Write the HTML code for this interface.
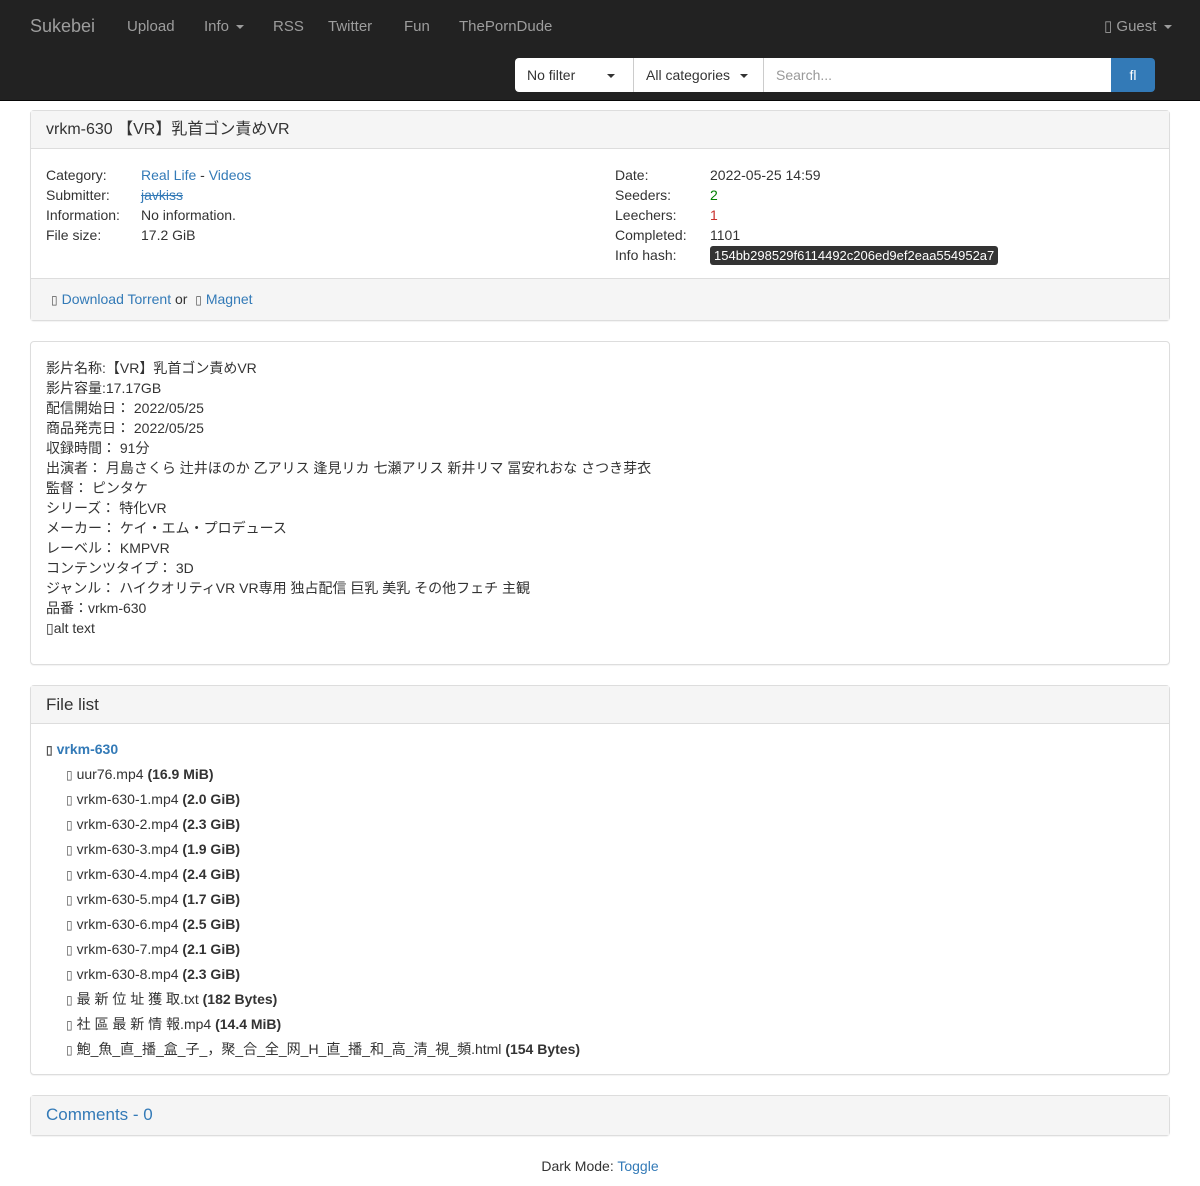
<!DOCTYPE html>
<html><head><meta charset="utf-8"><style>
*{box-sizing:border-box}
body{margin:0;background:#fff;font-family:"Liberation Sans","Noto Sans CJK JP",sans-serif;font-size:14px;color:#333;line-height:20px}
a{color:#337ab7;text-decoration:none}
.nav{height:101px;background:#222;border-bottom:1px solid #080808;position:relative}
.nav .i{position:absolute;top:17px;color:#9d9d9d;font-size:15px}
.brand{font-size:18px!important;top:16px!important}
.caret{display:inline-block;border-top:4px solid;border-left:4px solid transparent;border-right:4px solid transparent;vertical-align:middle;margin-left:3px}
.srch{position:absolute;top:58px;left:515px;height:34px;width:640px;display:flex}
.srch div{background:#fff;height:34px;line-height:34px;padding:0 12px;border-right:1px solid #ccc;color:#333}
.panel{position:absolute;left:30px;width:1140px;border:1px solid #ddd;border-radius:4px;background:#fff;box-shadow:0 1px 1px rgba(0,0,0,.05)}
.ph{background:#f5f5f5;border-bottom:1px solid #ddd;height:38px;line-height:37px;padding:0 15px;font-size:16px}
.row{position:absolute;white-space:nowrap}
.lab{display:inline-block;width:95px}
.fl div{height:25px;line-height:25px}
.ic{font-size:12px;color:#555;margin-right:4px}
</style></head><body>
<div class="nav">
<span class="i brand" style="left:30px">Sukebei</span>
<span class="i" style="left:127px">Upload</span>
<span class="i" style="left:204px">Info <span class="caret"></span></span>
<span class="i" style="left:273px">RSS</span>
<span class="i" style="left:328px">Twitter</span>
<span class="i" style="left:404px">Fun</span>
<span class="i" style="left:459px">ThePornDude</span>
<span class="i" style="left:1104px">▯ Guest <span class="caret"></span></span>
<div class="srch">
<div style="width:119px;border-radius:4px 0 0 4px">No filter <span class="caret" style="margin-left:28px"></span></div>
<div style="width:130px">All categories <span class="caret" style="margin-left:6px"></span></div>
<div style="flex:1;color:#999;border:none">Search...</div>
<div style="width:44px;background:#337ab7;color:#fff;text-align:center;border-radius:0 4px 4px 0;border:none">fl</div>
</div>
</div>

<div class="panel" style="top:110px;height:211px">
<div class="ph">vrkm-630 【VR】乳首ゴン責めVR</div>
<div class="row" style="left:15px;top:54px">
<div><span class="lab">Category:</span><a>Real Life</a> - <a>Videos</a></div>
<div><span class="lab">Submitter:</span><a style="text-decoration:line-through">javkiss</a></div>
<div><span class="lab">Information:</span>No information.</div>
<div><span class="lab">File size:</span>17.2 GiB</div>
</div>
<div class="row" style="left:584px;top:54px">
<div><span class="lab">Date:</span>2022-05-25 14:59</div>
<div><span class="lab">Seeders:</span><span style="color:green">2</span></div>
<div><span class="lab">Leechers:</span><span style="color:#c9302c">1</span></div>
<div><span class="lab">Completed:</span>1101</div>
<div><span class="lab">Info hash:</span><span style="background:#333;color:#fff;border-radius:3px;padding:2px 4px;font-size:13px">154bb298529f6114492c206ed9ef2eaa554952a7</span></div>
</div>
<div style="position:absolute;left:0;right:0;bottom:0;height:42px;background:#f5f5f5;border-top:1px solid #ddd;padding:10px 20px;line-height:20px"><a><span class="ic">▯</span>Download Torrent</a> or &nbsp;<a><span class="ic">▯</span>Magnet</a></div>
</div>

<div class="panel" style="top:341px;height:324px;padding:16px 15px">
影片名称:【VR】乳首ゴン責めVR<br>影片容量:17.17GB<br>配信開始日： 2022/05/25<br>商品発売日： 2022/05/25<br>収録時間： 91分<br>出演者： 月島さくら 辻井ほのか 乙アリス 逢見リカ 七瀬アリス 新井リマ 冨安れおな さつき芽衣<br>監督： ピンタケ<br>シリーズ： 特化VR<br>メーカー： ケイ・エム・プロデュース<br>レーベル： KMPVR<br>コンテンツタイプ： 3D<br>ジャンル： ハイクオリティVR VR専用 独占配信 巨乳 美乳 その他フェチ 主観<br>品番：vrkm-630<br>▯alt text
</div>

<div class="panel" style="top:685px;height:390px">
<div class="ph" style="font-size:17px">File list</div>
<div class="fl" style="padding:13px 15px">
<div><a style="font-weight:bold"><span class="ic">▯</span>vrkm-630</a></div>
<div style="padding-left:20px"><span class="ic">▯</span>uur76.mp4 <b>(16.9 MiB)</b></div>
<div style="padding-left:20px"><span class="ic">▯</span>vrkm-630-1.mp4 <b>(2.0 GiB)</b></div>
<div style="padding-left:20px"><span class="ic">▯</span>vrkm-630-2.mp4 <b>(2.3 GiB)</b></div>
<div style="padding-left:20px"><span class="ic">▯</span>vrkm-630-3.mp4 <b>(1.9 GiB)</b></div>
<div style="padding-left:20px"><span class="ic">▯</span>vrkm-630-4.mp4 <b>(2.4 GiB)</b></div>
<div style="padding-left:20px"><span class="ic">▯</span>vrkm-630-5.mp4 <b>(1.7 GiB)</b></div>
<div style="padding-left:20px"><span class="ic">▯</span>vrkm-630-6.mp4 <b>(2.5 GiB)</b></div>
<div style="padding-left:20px"><span class="ic">▯</span>vrkm-630-7.mp4 <b>(2.1 GiB)</b></div>
<div style="padding-left:20px"><span class="ic">▯</span>vrkm-630-8.mp4 <b>(2.3 GiB)</b></div>
<div style="padding-left:20px"><span class="ic">▯</span>最 新 位 址 獲 取.txt <b>(182 Bytes)</b></div>
<div style="padding-left:20px"><span class="ic">▯</span>社 區 最 新 情 報.mp4 <b>(14.4 MiB)</b></div>
<div style="padding-left:20px"><span class="ic">▯</span>鮑_魚_直_播_盒_子_，聚_合_全_网_H_直_播_和_高_清_視_頻.html <b>(154 Bytes)</b></div>
</div>
</div>

<div class="panel" style="top:1095px;height:41px">
<div class="ph" style="border:none;color:#337ab7;font-size:17px;height:39px">Comments - 0</div>
</div>
<div style="position:absolute;top:1156px;width:1200px;text-align:center">Dark Mode: <a>Toggle</a></div>
</body></html>
